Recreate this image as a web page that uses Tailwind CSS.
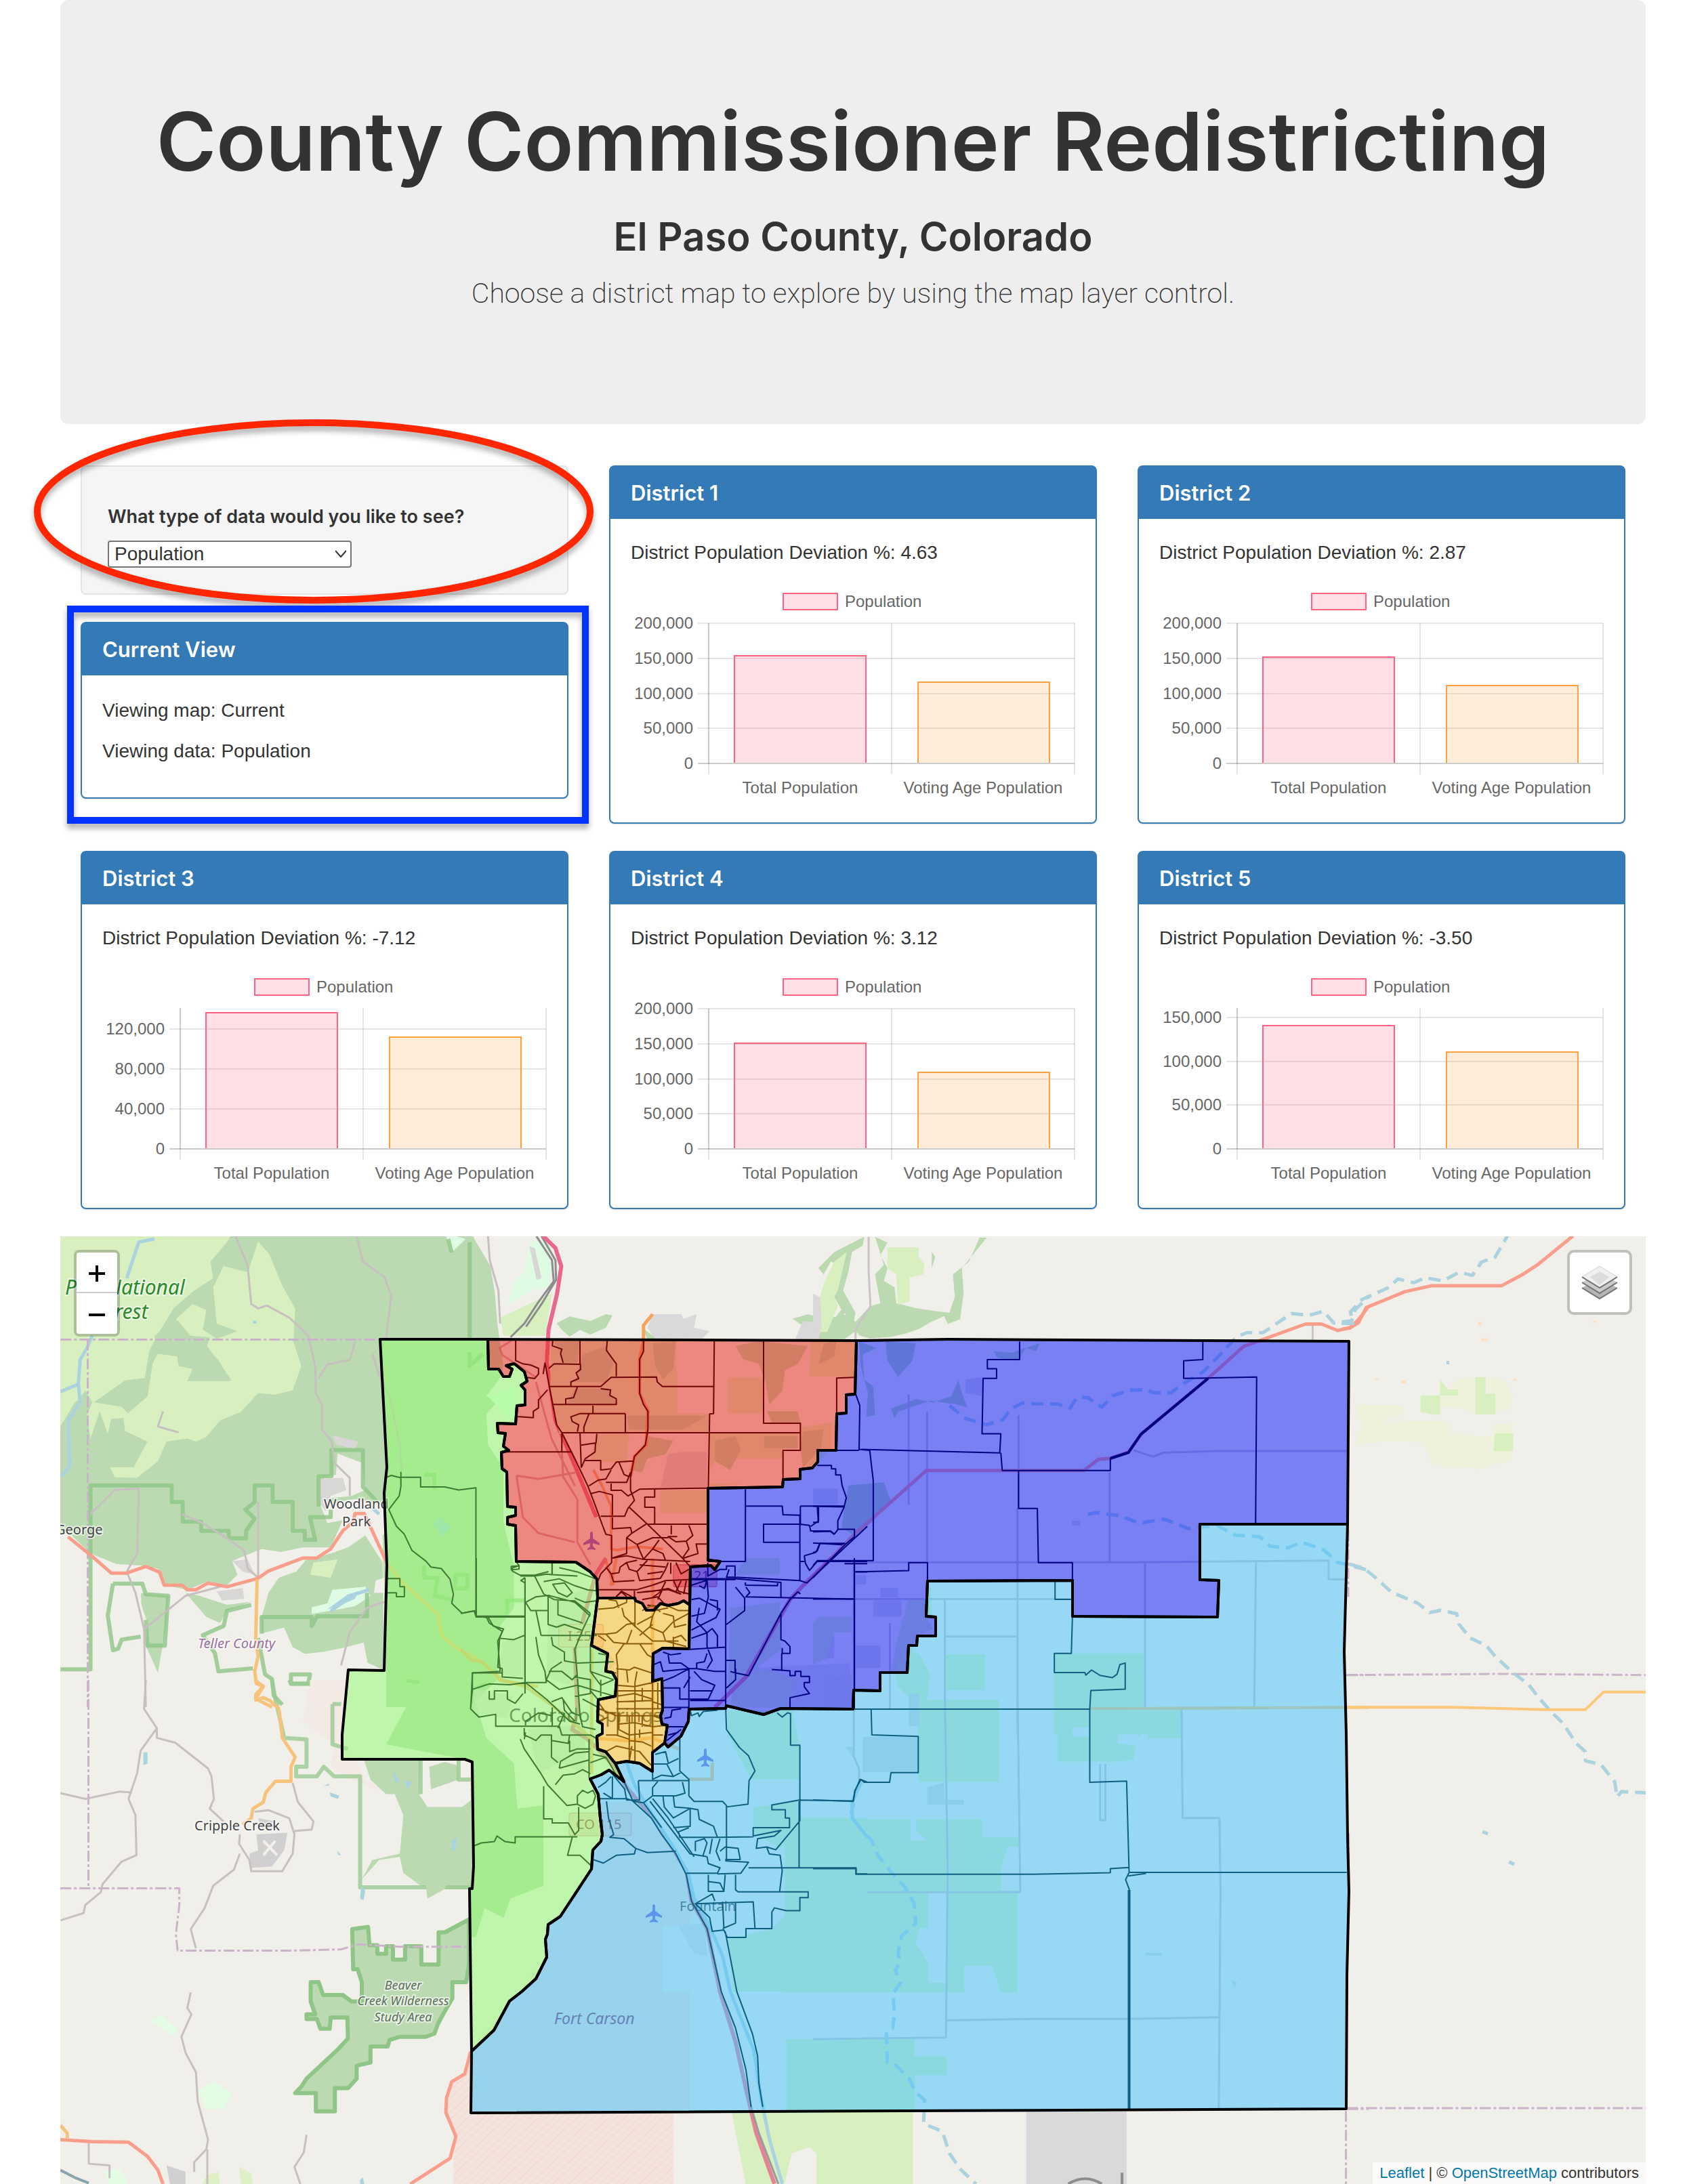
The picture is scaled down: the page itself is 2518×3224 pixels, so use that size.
<!DOCTYPE html>
<html lang="en">
<head>
<meta charset="utf-8">
<meta name="viewport" content="width=device-width, initial-scale=1">
<title>County Commissioner Redistricting</title>
<script src="https://cdn.jsdelivr.net/npm/@tailwindcss/browser@4"></script>
</head>
<body class="bg-white font-['Liberation_Sans',Arial,sans-serif] text-[28px] leading-10 text-[#333333]">
<div class="mx-auto w-full max-w-[2340px]">

  <header class="flex flex-col items-center rounded-xl bg-[#eeeeee] px-[120px] pt-[140px] pb-[164px] text-center">
    <h1 class="font-['Inter',sans-serif] text-[120px] leading-[138px] font-semibold">County Commissioner Redistricting</h1>
    <h2 class="mt-[38px] font-['Inter',sans-serif] text-[58px] leading-[66px] font-semibold">El Paso County, Colorado</h2>
    <p class="mt-[22px] font-['Roboto',sans-serif] text-[41px] leading-[58px] font-extralight">Choose a district map to explore by using the map layer control.</p>
  </header>

  <main>
    <div class="grid grid-cols-3 items-start gap-x-[60px] gap-y-10 px-[30px] pt-[61px] pb-10">

      <div class="relative flex flex-col gap-10">
        <form class="h-[191px] rounded-lg border-2 border-[#e3e3e3] bg-[#f5f5f5] px-[38px] pt-[54px]">
          <label for="datatype" class="block font-['Inter',sans-serif] text-[27px] leading-10 font-semibold">What type of data would you like to see?</label>
          <div class="relative mt-[15px] w-[360px]">
            <select id="datatype" class="block h-10 w-full appearance-none rounded border-2 border-[#767676] bg-white pl-2 leading-9 text-[#333333]">
              <option>Population</option>
            </select>
            <svg class="pointer-events-none absolute top-3 right-2 h-4 w-4" viewBox="0 0 16 16" fill="none" stroke="#333" stroke-width="2"><path d="M0 3l8 9 8-9"/></svg>
          </div>
        </form>

        <section class="rounded-lg border-2 border-[#337ab7] bg-white shadow-sm">
          <h3 class="bg-[#337ab7] px-[30px] py-5 font-['Inter',sans-serif] text-[31px] leading-[37px] font-semibold text-white">Current View</h3>
          <div class="flex flex-col gap-5 px-[30px] pt-8 pb-12">
            <p>Viewing map: Current</p>
            <p>Viewing data: Population</p>
          </div>
        </section>

        <!-- call-out marks over the form and the summary panel -->
        <svg class="pointer-events-none absolute inset-0 h-full w-full overflow-visible" fill="none" stroke-width="10">
          <g class="drop-shadow-[0_7px_4px_rgba(0,0,0,0.3)]"><ellipse cx="344" cy="68" rx="408" ry="131" stroke="#ff2600"/></g>
          <g class="drop-shadow-[0_7px_4px_rgba(0,0,0,0.3)]"><rect x="-15" y="212" width="760" height="312" stroke="#0433ff"/></g>
        </svg>
      </div>

      <section class="rounded-lg border-2 border-[#337ab7] bg-white shadow-sm">
        <h3 class="bg-[#337ab7] px-[30px] py-5 font-['Inter',sans-serif] text-[31px] leading-[37px] font-semibold text-white">District 1</h3>
        <div class="px-[30px] py-[30px]"><p class="mb-5">District Population Deviation %: 4.63</p><figure data-top="64" data-ticks="200,150,100,50,0" data-step="51.7" data-bars="112,151"></figure></div>
      </section>
      <section class="rounded-lg border-2 border-[#337ab7] bg-white shadow-sm">
        <h3 class="bg-[#337ab7] px-[30px] py-5 font-['Inter',sans-serif] text-[31px] leading-[37px] font-semibold text-white">District 2</h3>
        <div class="px-[30px] py-[30px]"><p class="mb-5">District Population Deviation %: 2.87</p><figure data-top="64" data-ticks="200,150,100,50,0" data-step="51.7" data-bars="114,156"></figure></div>
      </section>
      <section class="rounded-lg border-2 border-[#337ab7] bg-white shadow-sm">
        <h3 class="bg-[#337ab7] px-[30px] py-5 font-['Inter',sans-serif] text-[31px] leading-[37px] font-semibold text-white">District 3</h3>
        <div class="px-[30px] py-[30px]"><p class="mb-5">District Population Deviation %: -7.12</p><figure data-top="63" data-ticks="120,80,40,0" data-step="59" data-bars="70,106"></figure></div>
      </section>
      <section class="rounded-lg border-2 border-[#337ab7] bg-white shadow-sm">
        <h3 class="bg-[#337ab7] px-[30px] py-5 font-['Inter',sans-serif] text-[31px] leading-[37px] font-semibold text-white">District 4</h3>
        <div class="px-[30px] py-[30px]"><p class="mb-5">District Population Deviation %: 3.12</p><figure data-top="64" data-ticks="200,150,100,50,0" data-step="51.7" data-bars="115,158"></figure></div>
      </section>
      <section class="rounded-lg border-2 border-[#337ab7] bg-white shadow-sm">
        <h3 class="bg-[#337ab7] px-[30px] py-5 font-['Inter',sans-serif] text-[31px] leading-[37px] font-semibold text-white">District 5</h3>
        <div class="px-[30px] py-[30px]"><p class="mb-5">District Population Deviation %: -3.50</p><figure data-top="63" data-ticks="150,100,50,0" data-step="64.7" data-bars="89,128"></figure></div>
      </section>
    </div>

    <section class="relative overflow-hidden bg-[#f1efe9]" aria-label="District map">
      <svg class="block w-full font-['Noto_Sans',sans-serif] [&_path]:[vector-effect:non-scaling-stroke]" viewBox="89 1825 2340 1399" fill="none" stroke-linejoin="round">
        <defs>
          <pattern id="hatch" width="16" height="16" patternUnits="userSpaceOnUse" patternTransform="rotate(45)"><rect width="16" height="16" fill="#f3e3dc"/><path d="M0 0V16" stroke="#efd3cc" stroke-width="3"/></pattern>
        </defs>

        <!-- north-west: Pike National Forest -->
        <g transform="translate(80 1820) scale(.5102 .4464)">
          <path fill="#bbdab1" d="M0 0H1205L1262 110 1275 200 1282 300 1300 440 1290 480 1250 540 1280 560 1250 600 1255 700 1300 780V960L1330 1100V1240L1290 1300 1280 1480 1200 1568H960V1445L955 900 870 880 770 900 790 960 835 950 800 1040 720 1040 655 1055 600 1045 515 1085 530 1130 500 1165 440 1155 385 1180 320 1165 300 1110 250 1100 180 1095 105 1060 50 1000 0 985Z"/>
          <path fill="#bbdab1" d="M700 1120L730 1080 800 1060 850 1040 900 1000 950 1090 955 1447 905 1420 895 1355 845 1370 780 1385 725 1392 690 1370 665 1305 600 1325V1270L620 1190 650 1140ZM950 1000L960 1448H1000V950Z"/>
          <path fill="#bbdab1" d="M240 1190L330 1200 325 1290 300 1455 265 1365 270 1290ZM380 1190L420 1200 500 1230 570 1220 500 1250 480 1290 440 1270Z"/>
          <path fill="#d8efc0" d="M0 0H515L500 30 452 95 460 150 400 195 345 250 300 335 275 390 262 480 205 488 115 560 195 575 225 610 165 615 155 665 132 590 120 630 105 680 85 540 60 560 18 640 0 630ZM590 28L622 70 660 175 697 250 692 360 715 440 690 520 640 535 590 530 540 592 480 620 440 675 410 690 385 680 325 690 300 755 240 810 175 808 162 775 230 775 270 690 205 655 200 610 270 540 285 430 310 380 352 385 360 440 400 450 385 490 510 490 475 420 440 380 450 345 395 340 352 285 400 235 440 255 430 320 470 350 530 325 470 300 460 180 490 110 560 130Z"/>
          <path fill="#bbdab1" d="M18 640L90 520 110 560 60 700 20 780ZM440 370L515 490 440 420 300 400 290 340 360 290 380 340Z"/>
          <path fill="#e0fbe4" d="M1130 0L1190 20 1150 65ZM1375 30L1440 25 1435 180 1380 190 1310 240 1330 160 1360 130ZM805 1180L900 1170 915 1200 870 1235 745 1260 745 1238 790 1225ZM1255 540L1340 510 1335 620 1310 610Z"/>
          <path fill="#f1efe9" d="M820 1380L895 1355 907 1425 840 1440ZM165 1160H250L255 1340 185 1380 165 1370ZM465 1340L560 1320 580 1440 480 1450ZM930 1150L955 1140V1190H925ZM820 730L890 760 900 850 860 870 770 880 780 810 815 800Z"/>
          <path fill="#d8efc0" d="M1290 280L1440 200 1420 340H1300Z M750 1090L820 1080 800 1140 740 1130Z"/>
          <path fill="#d9d6d6" d="M765 815L835 810 845 850 800 870 785 920 765 890ZM805 670L880 690 870 715 815 700ZM470 1185L545 1175 550 1210 485 1215ZM515 1085L560 1080 580 1130 545 1120ZM1375 45L1390 50 1410 150 1395 155Z"/>
          <path stroke="#8fc587" stroke-opacity=".8" stroke-width="6" d="M18 1443H105V835H340V890H372V955H425V985H505V1010H555V985L580 945 553 915 580 890V835H632V890H690V985H725V1015H755L740 940H800V915M765 905V805H802V718H893V840L935 890M170 1160H255L265 1195 330 1200 320 1365H270L265 1280M170 1160L155 1265 170 1380 185 1375 195 1345 250 1335M600 1325V1270H745V1300L760 1268H905V1190M570 1230L500 1250 490 1300 430 1330 465 1390 475 1450 575 1440M590 1340L610 1460 630 1475 635 1530 660 1560M685 1460H740L735 1490H685ZM1202 30V350M1140 20L1150 65M1202 395V440L1240 400"/>
          <path stroke="#8fd080" stroke-width="6" opacity=".7" d="M1020 1480L1070 1490 1180 1530 1250 1490M1310 1260V1215H1360M1070 1100V1140H1110L1100 1200 1155 1215M1070 800H1100V850M1160 1130H1195V1175H1160Z"/>
          <path stroke="#c7bfc0" stroke-width="3" d="M525 11L560 110 570 235 590 250 615 240 680 280 735 340 755 440 757 530 775 570V650L803 690 810 760 855 810V870M875 11L893 95 935 130 955 145 975 210 960 350M870 360L855 420 790 435 765 480M105 930L175 850 245 845 240 1060 210 1120M210 1120L235 1190 260 1310 265 1568M260 1310L380 1200 480 1170M370 930L430 960 500 1010 550 1050 560 1110 590 1140V890M955 1220L905 1240 855 1320 830 1430M315 590L300 640 360 660M920 400L940 470 970 540 1000 700 1005 790M1255 11L1260 90 1285 190 1290 300"/>
          <path stroke="#8d8d8d" stroke-width="3" d="M1395 11L1440 90 1445 160 1400 230 1360 300 1320 345M1410 11L1450 90 1452 155 1410 235 1365 310"/>
          <path stroke="#aad3df" stroke-width="5" d="M290 20L245 30 230 80 210 150M110 340L95 380 75 420 70 500 18 525M70 500L75 560 40 620 45 770 20 805M920 910L940 930M800 1250L870 1195 910 1180M580 290V300"/>
          <path fill="#aad3df" d="M790 1245L850 1195 880 1185 870 1210 840 1225ZM1095 960L1120 940 1150 975 1120 1005Z"/>
          <path stroke="#cbb4c9" stroke-width="3" stroke-dasharray="16 4 4 4" d="M18 353H943M97 353V1568"/>
          <path stroke="#fa9e8c" stroke-width="5" d="M40 1005L110 1070 165 1125H210L265 1103 305 1122 318 1165H370L385 1180H410L445 1158 500 1170 590 1142 620 1118 720 1075H760L800 1045 835 985 865 955 870 928H897L920 985 960 1085"/>
          <path stroke="#f7c37c" stroke-width="5" d="M587 1145L583 1340 590 1400 580 1450 585 1490 605 1500 583 1540 630 1568M960 1085L1000 1150 1110 1260 1120 1330 1160 1370 1240 1420 1290 1480 1400 1500"/>
          <path stroke="#e8698b" stroke-width="6" d="M1415 11L1450 50 1467 110 1455 200 1430 320 1425 430 1450 620 1510 780 1568 940"/>
        </g>

        <!-- south-west: Cripple Creek and Beaver Creek -->
        <g transform="translate(80 2480) scale(.5102 .4745)">
          <path fill="#f3eae4" d="M740 0H845L833 246 870 250 900 310 960 350 880 320 800 270 810 200 720 130Z"/>
          <path fill="#bbdab1" d="M895 246H1060L1055 355H960L915 310ZM1085 270L1130 255 1165 265 1170 310 1090 340ZM985 355H1055L1080 395H1180L1210 370V650H1090L1060 640 1010 600 1000 550 940 560 890 620 920 560 1000 540 1010 420ZM960 200L1000 120 1060 0H1200L1250 180 1330 260 1340 400 1415 390V640L1320 680 1300 740 1245 710 1220 800H1205V250Z"/>
          <path fill="#bbdab1" stroke="#8fc587" stroke-width="6" d="M862 775L908 768 912 825H935V852H960V828H980V870H1015V828H1062V885H1112V785H1130L1200 745V885L1192 940H1152V990L1125 1040 1110 1070 1100 1100 1075 1110H1000L970 1120 965 1140H915V1190L875 1200V1240L850 1270H812V1342H757V1285H697L715 1265 730 1240 775 1195 820 1150 850 1115 848 1050H800L797 1085H770L760 1055H730V1040H755L742 1000V940H765L778 980H835L860 1000H890V940L878 900H865Z"/>
          <path stroke="#9acb93" stroke-width="6" opacity=".8" d="M630 0L640 60 655 130 665 180 730 185V270H700V300H760L780 270 810 300H885V645H1205M680 0L685 12H740M805 75H830M805 75V200L850 215M1060 355V246M1170 250V310H1205"/>
          <path fill="#bbdab1" d="M1075 640L1100 590 1150 585 1130 650 1080 680Z"/>
          <path fill="#e4fbe4" d="M275 1060L310 1040 355 1085 345 1108ZM415 1280L460 1248 515 1285 490 1335 440 1335ZM145 1530L190 1520 215 1568H160Z"/>
          <path fill="#dfefc6" d="M535 1515L570 1535 575 1568H540ZM440 1540L475 1530 480 1568H430Z"/>
          <path fill="#d2cfd0" d="M585 480L675 475 665 530 630 580 570 585 565 540 590 530ZM590 430L640 440 630 470 600 460ZM325 1510L380 1530V1568H335Z"/>
          <path stroke="#f1efe9" stroke-width="4" d="M605 500L645 545M640 500L605 545"/>
          <path stroke="#c7bfc0" stroke-width="3" d="M265 0L260 90 297 150V180L350 195 445 275 455 300 462 370 450 400 490 440M297 150L250 220 240 290 215 370 235 420 238 545 195 565 140 635 135 660 90 700 85 725 18 748M18 352L90 370 190 347 225 350M580 410L620 405 680 430 695 480 690 540 660 595H570L565 560 535 510 537 480M537 540L520 590 460 640 435 710 395 775 410 835M690 320L705 380 750 440 745 465 695 470M395 972L385 1020 397 1040 368 1110 380 1160 410 1220 415 1310 445 1430 440 1460 405 1500V1530M443 1460V1568M730 1415L722 1470 695 1515 712 1568M100 1440V1505L160 1510V1550"/>
          <path stroke="#8aa4ad" stroke-width="4" d="M18 1525L60 1548 100 1565"/>
          <path fill="#aad3df" d="M258 225H270V260L258 265ZM797 350L825 360 820 370 800 362ZM980 280L1000 320 985 315ZM1150 500L1165 490 1160 530 1148 530ZM888 640L900 655 895 685 885 680ZM1015 315H1035L1020 340ZM780 330L795 322V328ZM818 530L830 545 822 545ZM885 1555L893 1548 897 1568H885Z"/>
          <path stroke="#cbb4c9" stroke-width="3" stroke-dasharray="16 4 4 4" d="M99 0V647M18 648H362V700L352 790 357 842H680L830 838 880 822 1000 830H1200M1203 1350V1420H1210V1568"/>
          <path fill="url(#hatch)" d="M1205 1155L1210 1330H1792V1568H1155V1470L1162 1420 1135 1340 1150 1250 1188 1225Z"/>
          <path stroke="#fa9e8c" stroke-width="5" d="M18 1430L110 1436 215 1438 270 1482 300 1525 315 1568M1205 1155L1188 1225 1150 1250 1135 1300 1133 1345 1162 1420 1145 1488 1030 1568"/>
          <path stroke="#f7c37c" stroke-width="5" d="M580 0L605 20 583 45V62L605 55 625 65 650 90 660 180 697 240 685 270V315H640L612 350 605 380 575 400 570 430 545 450M18 1385L38 1410V1425"/>
        </g>

        <!-- north edge woodland and suburbs -->
        <g transform="translate(680 1940) scale(.3827 .3333)">
          <path fill="#d8efc0" d="M350 120H830V250H978L980 120V440H960V525H1310L1243 600V730L960 765V525H650L640 660 500 650 520 530H380L345 320ZM1030 280H1168V440H1030ZM1350 120H1520V275H1345ZM1310 500L1430 480V600L1330 700ZM770 780H950V880H770Z"/>
          <path fill="#f1efe9" d="M835 120H975V440H835ZM985 640H1240V750H960V690Z"/>
          <path fill="#bbdab1" d="M370 40L420 10 500 30 560 0 585 5 560 60 500 90 460 70 420 100 390 70ZM1280 20L1340 0 1400 20 1500 0 1540 60 1480 110 1300 110 1330 60ZM700 60L760 110 860 70 840 110H720ZM360 120H460L450 215H400ZM470 180L560 140 590 220 560 300 440 300ZM440 330L570 330 600 395H410ZM740 130L830 120 820 240 780 290 750 230ZM1060 140L1150 120 1340 140 1300 220 1250 250 1240 340 1190 400 1175 300 1150 220 1090 200ZM1400 130L1450 120 1440 190 1380 220ZM1180 430L1300 430 1310 480 1200 480ZM1320 520L1400 510 1390 590 1320 680 1310 590ZM640 450L950 450 860 510H650ZM720 540L820 560 790 620 720 640 700 700 650 690ZM980 560L1060 540 1080 600 1040 690 980 650ZM1170 540H1300V595H1170Z"/>
          <path fill="#d9d9d9" d="M740 0H850L860 20 910 0 900 60 960 75 930 110H750L720 60ZM1320 30L1400 40 1380 110H1290ZM850 610H950V765H770L800 620Z"/>
          <path stroke="#f6a35f" stroke-width="5" d="M740 0L705 50V120L690 200 690 350 722 430 715 580 670 630 655 720"/>
          <path stroke="#f09a60" stroke-width="4" opacity=".8" d="M512 690L545 760 580 850V1040L600 1045 680 1030 780 1040M560 1090L590 1200"/>
          <path stroke="#c08a90" stroke-width="3" opacity=".7" d="M215 715L300 730 450 700M215 715L240 900 300 970 440 1010M390 610L395 720 450 820V1010L500 1110M290 300L350 550 440 760M205 110L150 150 160 180 290 280"/>
        </g>

        <!-- north-east and plains -->
        <g transform="translate(1200 1820) scale(.523 .472)">
          <path fill="#bbdab1" d="M15 110L60 60 130 20 145 12 140 40 110 60 100 120 85 180 120 250 110 300 90 250 60 320 20 325 80 240 60 200 80 100 50 90 30 130ZM175 12L210 30 190 70 210 110 200 150 230 170 235 220 290 235 350 245 385 250 400 200 395 130 440 90 470 15H490L450 70 420 110 425 190 415 270 380 285 370 260 330 280 300 300 260 315 220 325 160 330 130 320 110 290 160 230 190 220 175 130 200 100ZM205 340L290 345 280 400 240 450 210 400ZM335 60L345 75 335 110ZM130 340L180 360 140 380 145 460 170 480 175 570 150 575 155 500 135 420ZM510 370L560 375 640 345 630 370 600 360 580 400 520 390ZM220 550L290 520 340 530 390 510 410 460 420 500 435 545 400 535 330 525 240 560 230 580ZM100 790L200 780 220 840 170 900 120 950 80 920Z"/>
          <path fill="#d8efc0" d="M210 45H298V75L315 100 310 130 272 140V215L240 225 235 130 210 110ZM60 90L95 60 70 180 60 200 70 230 40 310H20L15 220 30 160Z"/>
          <path fill="#d9d9d9" d="M0 190L20 200 25 300 0 310ZM430 460L480 450 475 510 430 500ZM0 800H70V850H0ZM120 1070H150V1100H120ZM190 1110H240V1140H190ZM730 900H755V915H730ZM170 1150H250V1200H170ZM120 1290H190V1360H120ZM0 1260H60V1330H0Z"/>
          <path fill="#d6e8c2" d="M270 1145H320V1200L340 1240 290 1260 270 1370 220 1375 240 1260ZM20 1200H110V1250H60L40 1330 0 1350V1220ZM30 1400L110 1380V1470H30Z"/>
          <path fill="#d6eebf" d="M323 1110H335V1200H323ZM255 1310L300 1315 330 1380 320 1480H300L240 1420 230 1370ZM375 1318H485V1430H375ZM680 1315H933V1485H680ZM295 1490H525V1568H295ZM680 1490H1040V1568H680Z"/>
          <path stroke="#c9c4c8" stroke-width="3" d="M157 12V120L162 230 120 300V340M1410 285V335M270 505V850M322 560V1030M580 570V860M837 750V1030M120 1030H900L1455 1025V1083H1505M937 1030V1485M1250 1030L1245 1485M115 1145H730M372 1145V1568M577 860V1568M372 1262H577M217 1220V1490M905 680L960 700 990 687 1150 682H1505M115 1030V1568"/>
          <path stroke="#aad3df" stroke-width="5" stroke-dasharray="18 10" d="M385 540L430 580 490 600 535 585 560 550 590 532 640 535 690 535 725 548 745 515 775 515 815 545 845 510 890 492 940 490 960 500 1010 500 1040 475 1100 435 1150 380 1195 325 1225 312 1270 312 1300 290 1350 252 1400 258 1440 245 1470 282 1520 275 1530 240 1568 200M775 880L800 875 870 885 920 908 990 895 1060 925 1140 915 1190 945 1260 950 1290 980 1340 985 1380 968 1440 990 1480 1030 1568 1055"/>
          <path stroke="#fa9e8c" stroke-width="5" d="M0 1075L115 945 320 743H765L805 708 840 705 890 685 930 625 1120 450 1215 355 1390 285H1435L1480 305 1515 297 1540 270 1568 230"/>
          <path stroke="#fbc77a" stroke-width="4" d="M780 1488L1568 1484"/>
          <path stroke="#cbb4c9" stroke-width="3" stroke-dasharray="16 4 4 4" d="M1508 1383H1568"/>
        </g>

        <!-- south-east plains -->
        <g transform="translate(1200 2500) scale(.523 .4617)">
          <path fill="#d6eebf" d="M300 20H525V283H297V110H310ZM680 0H933V50H1040V143H945L940 100 920 140 915 105H860V160L910 165 905 210 860 218H690V100H680ZM-80 397H110L118 402H275V470H325L290 440V402H477V460H580V490H550L530 560V630H577V955H530L505 870H427V955H-80ZM-75 1105H285V1160H377V1220H287V1338H-75Z"/>
          <path fill="#f1efe9" d="M325 637H375V925H325V860L290 800 300 750H325ZM733 108H780V138H733Z"/>
          <path fill="#d8efc0" d="M-230 1336H282V1568H10V1470L-10 1450 -60 1470 -80 1568H-190Z"/>
          <path fill="#d9d9d9" d="M602 1336H885V1568H602ZM322 300L370 285 372 340H425V355H322ZM140 138H297V252H140ZM270 0H300V105H270ZM937 828H985V838H937ZM1180 915L1197 925 1190 942ZM90 170H115V205Z"/>
          <path stroke="#c9c4c8" stroke-width="3" d="M372 0L380 570 375 1100 0 1105M577 0L585 635H0M375 1045L620 1040 890 1040 1145 1035M1040 50L1043 398H1147L1150 630 1145 1325M810 225V405H825V225M115 50V200L130 240V280"/>
          <path stroke="#8d8d8d" stroke-width="4" d="M720 1568Q768 1535 815 1568M872 1532V1568"/>
          <path stroke="#aad3df" stroke-width="5" stroke-dasharray="18 10" d="M115 350L108 380 120 405 165 470 185 520 220 570 260 620 285 670 290 735 250 775 240 830 245 860 232 885 247 925 225 960 230 1020 225 1070 207 1080 210 1180 235 1190 270 1230 290 1275 315 1300 312 1375 365 1400 385 1470 415 1520 460 1568"/>
          <path stroke="#fbc77a" stroke-width="4" d="M780 48L1568 44"/>
          <path stroke="#cbb4c9" stroke-width="3" stroke-dasharray="16 4 4 4" d="M1508 1328H1568M1504 1335V1568"/>
        </g>

        <!-- far east -->
        <g transform="translate(1980 1820) scale(.3333 .8954)">
          <path fill="#eff2da" d="M65 285L180 283 270 285V300L190 305 200 315 310 310H470L480 330 590 335H670L680 315H755V375L600 390 580 385 500 388 400 380 360 345 190 343 60 350 90 320ZM440 270L520 240H590V300L540 290 440 285ZM640 240H720L760 270 740 295 680 290Z"/>
          <path fill="#d8efc0" d="M350 268H437V300H410L350 295ZM437 242L470 258H517V268H437ZM593 238H638V265H682V299H593ZM680 330H760V360H673Z"/>
          <path fill="#fbe0c4" d="M605 147H622V153H605ZM618 174H648V178H618ZM148 239H163V242H148ZM265 243H285V248H265ZM760 240H775V244H760ZM1115 145H1130V148H1115Z"/>
          <path stroke="#fa9e8c" stroke-width="5" d="M0 159L40 156 75 148 110 123 280 97 400 87H710L800 69 870 52 1025 5"/>
          <path stroke="#aad3df" stroke-width="5" stroke-dasharray="18 10" d="M0 149H50L40 130 90 110 180 95 210 90 250 76 320 82 370 74 450 79 520 65 580 70 620 48 680 40 735 5M35 546L100 553 150 568 220 592 340 611 390 626 440 622 510 628 520 645 570 668 640 680 680 698 750 722 830 745 870 765 930 790 980 808 1040 842 1080 855 1080 870 1150 877 1210 905 1220 930 1240 921 1347 923"/>
          <path stroke="#aad3df" stroke-width="5" d="M625 987L648 991M742 1037L765 1041M465 214H477"/>
          <path stroke="#fbc77a" stroke-width="4" d="M20 782H500L900 786H1080L1160 757H1347"/>
          <path stroke="#cbb4c9" stroke-width="3" stroke-dasharray="16 4 4 4" d="M20 729L700 727 1347 729M25 1443H1347M30 490V600M32 990V1060"/>
        </g>

        <!-- city blocks, Fort Carson and the interstate -->
        <g transform="translate(680 2300) scale(.3827 .4082)">
          <path fill="url(#hatch)" d="M40 1980V1780L230 1568 335 1440 340 1330 510 1120 545 1000 530 880H660L760 980 860 1100 900 1240 880 1330H780V1568H885V2010H40Z"/>
          <path fill="#f3e3dc" d="M250 30L440 20 520 120 500 200 250 180ZM250 600L500 590 500 800 420 900 330 820Z" opacity=".5"/>
          <path fill="#dcd9d9" opacity=".8" d="M340 150L500 110 490 250 600 380 480 480 330 430ZM160 300L245 290V430L150 420ZM50 470L200 500 180 580 50 560ZM1060 400L1500 380 1510 540 1040 540ZM840 1330L940 1320 950 1440 900 1430ZM260 620L480 600V780L380 740 300 780Z"/>
          <path fill="#d6e8c2" d="M1040 180L1230 160 1235 330 1110 420 1030 500ZM1060 440L1180 400 1290 440 1270 540H1040ZM1100 0H1230V60H1060Z"/>
          <path fill="#d6eebf" d="M1030 550H1280L1305 680V800H1120L1030 640ZM1130 900L1300 880V1000L1230 1050 1130 990ZM1310 940H1568V1568H1050L1030 1380 1200 1340 1340 1210 1240 1130 1310 1120Z"/>
          <path stroke="#e8698b" stroke-width="6" opacity=".8" d="M560 0L520 60 470 230 440 330 450 560 430 620 490 655 600 760 640 830 760 960 830 1070 870 1130 890 1240 950 1340 1000 1568 1060 1750 1100 1920 1140 2080 1210 2263M1430 0L1320 100 1270 150 1100 430 980 540"/>
          <path stroke="#f2b36b" stroke-width="5" opacity=".8" d="M0 330L40 370 80 375 160 440 250 465 350 530 440 600 500 650 640 660 740 650 840 690M505 330V780M580 100L600 0M880 800H970V740M740 0V700"/>
          <path stroke="#aad3df" stroke-width="5" d="M640 740L670 820 720 900 830 1060 880 1150 900 1230 960 1330 1010 1440 1040 1568 1130 1780 1160 1960 1190 2100 1240 2263M1545 810L1510 880V940L1568 1010"/>
          <path stroke="#9b9b9b" stroke-width="3" d="M1120 1985L1150 2080 1225 2263"/>
          <rect x="378" y="240" width="172" height="82" rx="8" fill="#f2d5cc" stroke="#dba9a0" stroke-width="3"/>
          <rect x="418" y="922" width="240" height="82" rx="8" fill="#f2d5cc" stroke="#dba9a0" stroke-width="3"/>
          <rect x="820" y="24" width="168" height="80" rx="8" fill="#e6a7b4" stroke="#c96f88" stroke-width="3"/>
        </g>
        <g fill="#7a69d8">
          <path d="M-2 -12Q0 -16 2 -12V-4L12 3V6L2 3V8L6 11V13L0 12 -6 13V11L-2 8V3L-12 6V3L-2 -4Z" transform="translate(873 2275)"/>
          <path d="M-2 -12Q0 -16 2 -12V-4L12 3V6L2 3V8L6 11V13L0 12 -6 13V11L-2 8V3L-12 6V3L-2 -4Z" transform="translate(1041 2595)"/>
          <path d="M-2 -12Q0 -16 2 -12V-4L12 3V6L2 3V8L6 11V13L0 12 -6 13V11L-2 8V3L-12 6V3L-2 -4Z" transform="translate(965 2825)"/>
        </g>

        <g stroke="#ffffff" stroke-opacity=".6" stroke-width="4" paint-order="stroke">
          <g font-size="30" font-style="italic" fill="#2a8a2a"><text x="96" y="1911">Pike National</text><text x="138" y="1947">Forest</text></g>
          <g font-size="20" fill="#444444"><text x="478" y="2227">Woodland</text><text x="505" y="2253">Park</text><text x="82" y="2265">George</text><text x="287" y="2702">Cripple Creek</text></g>
          <text x="292" y="2433" font-size="20" font-style="italic" fill="#9a6fa0">Teller County</text>
          <g font-size="18" font-style="italic" fill="#5b6f58" text-anchor="middle"><text x="595" y="2937">Beaver</text><text x="595" y="2960">Creek Wilderness</text><text x="595" y="2984">Study Area</text></g>
        </g>
        <g fill="#444444">
          <text x="751" y="2542" font-size="28">Colorado Springs</text>
          <text x="1003" y="2821" font-size="20">Fountain</text>
          <g font-size="20" fill="#9a4b3e"><text x="838" y="2422">I 25</text><text x="850" y="2700">CO 115</text></g>
          <text x="1024" y="2333" font-size="20" fill="#7a2f60">21</text>
        </g>

        <g id="district-fills"></g>
        <text x="818" y="2988" font-size="23" font-style="italic" fill="#6782b4">Fort Carson</text>

        <!-- precinct boundaries -->
        <g stroke="#3f7a33" stroke-width="2">
          <path transform="translate(80 1820) scale(.5102 .4464)" d="M962 808L975 802 1003 810V838L998 870 968 915 990 970 1012 995 1035 1050 1075 1085 1090 1105 1120 1110 1145 1145 1155 1195 1150 1225 1180 1258 1215 1250 1220 1268 1255 1270 1270 1300 1300 1310 1283 1350 1290 1450 1210 1455 1205 1568M1003 790V838M1003 808H1060V840H1130L1170 850 1220 843V1270H1362M962 1143H1000V1170H1013V1203H990V1190H962M1338 1090L1345 1100 1325 1108V1118L1348 1132H1390L1430 1120M1440 1090V1130M1362 1140V1485M1362 1140L1350 1150"/>
          <path transform="translate(680 2300) scale(.3827 .4082)" d="M195 30L225 28V40L195 42ZM230 65H285L330 58 353 60 450 65M353 20V60M248 85V490M230 80L248 90M285 65L320 130 360 150 440 155 500 200M320 85L380 75 440 100 490 115 525 118M355 95L400 90 430 125 410 140 375 125ZM250 160L290 140 340 135 440 160 500 210M250 160L270 190 335 190M290 190L310 280M337 135V240L370 250 400 240 470 262M375 150V205L470 235M310 280H525M290 285L300 350 325 410 330 450 250 450M350 285L355 315 400 340V372L450 380 590 375M500 200L470 260 440 330 450 430 460 570 470 610 520 620M330 440L350 400 390 375M340 410L390 410 430 440 450 420M500 310V410L590 440M530 345L560 350M500 410L540 460 590 440M540 440V500M250 450L330 510 420 590 460 600M330 440L380 475 450 460 595 500M350 520L390 505 430 560 460 570M45 475V415H160M45 475L110 455 190 458 250 450M45 475L38 545 70 575 135 565V608H380L390 640H500L530 655M110 480V510H130V480H180V510L210 525 240 490M353 540V608M250 605V590L300 560 353 570M395 510L400 550 440 590M245 615V640L270 650 290 660 310 640H350V720L375 740M230 655L245 690 310 780 335 820 410 895 450 890M245 655L250 630M353 660L415 670 420 640M420 660V700L450 690 500 690M380 760L385 735 440 705 495 700V795M380 760L495 730M320 825V943H353V958H415L440 1000 455 985V900M365 820L395 785 440 780 470 765 500 780M450 890L450 860 470 840 490 850 510 840 520 860 510 890 480 905ZM53 1040L80 1030 130 1025 140 1005 170 1025 210 1030V1008H450M430 1010L412 1075H460L500 1110M60 0V210H248M0 200L30 195 60 190M60 210L100 215 110 235 160 265 150 290 205 295 245 280M150 290L143 395 160 400V430L240 435M495 655V710M500 740L560 720 610 800M510 710L560 720M375 615L400 560M500 480L530 512M470 510L530 540M440 430L500 440V490L440 500M520 155L480 160 440 145M380 35L450 50 520 75"/>
        </g>
        <g stroke="#6f0505" stroke-width="2">
          <path transform="translate(680 1940) scale(.3827 .3333)" d="M212 115V205L240 220 270 225 300 240V265L285 285 255 280M355 115L353 140 390 155 385 175 395 215M460 118V220M360 220L462 222V245L445 260 455 285 425 300V320M340 240L360 220M565 118L562 160 600 220V275M705 118V165L690 200V350L705 400 722 430 722 510 712 580 670 630 655 720 655 780 670 825 645 860 632 895H540M978 118L975 440 960 442 955 770M1168 118V483H1310V603H1243V730M1520 280L1450 283V440M345 320H540L580 280 755 278 758 300 778 320H975M325 215L318 265M325 215L345 340 370 490 390 525 440 640 490 760 520 850 545 930 560 975 582 980V1100L540 1150 530 1180M355 400H600V375L575 360 578 335 540 330M450 322L435 370 405 375V397M510 405V437M390 525H1310M635 440V525M460 440H635M460 440L425 455 430 475 455 490 450 520M495 440L475 500V525M460 525L465 680M525 530L522 570 465 580M520 570L518 610 480 640 465 680M155 610H425M390 525V608M335 335L300 380V415L280 430V458L215 453M480 648H540V690L580 685 600 655 665 650M610 655L630 710 650 720M580 690L560 730 530 735 495 760M560 745L640 745 655 700M500 795L535 785 585 800V890M580 750V780L620 780 645 805 690 775 950 770M748 775V810H710V855H748V930M650 855L720 930 855 1080 885 1118M720 930H950M812 935V975M585 900V950L655 945 660 970 640 990V1060L585 1080M660 970L715 930M640 990L680 1020 740 990 800 990M680 1020L705 1085 740 1040 765 1000M740 1040L780 1060 790 1090M880 935L895 980 870 1005 830 1008 800 985 835 985M870 1005L880 1040 855 1080M950 1018H908L915 1060 860 1080M585 1080L640 1070 700 1085 790 1090 885 1095M560 1120L580 1150 610 1145 615 1120 640 1100 680 1090M640 1100L650 1130 680 1140 720 1090M690 1110L790 1120M580 1150L590 1185 670 1180M680 1140L690 1180 770 1170 790 1130 800 1100M720 1150L780 1140M810 1100V1150M830 1100L850 1150 880 1130M530 1220H680L740 1200 790 1180 880 1175M600 1250L620 1230 640 1250M670 1225V1255M700 1230L800 1220 850 1240M790 1185L770 1230 740 1255M850 1180L830 1230M870 1180L860 1240"/>
          <path transform="translate(680 2300) scale(.3827 .4082)" d="M600 140L620 120 660 140M680 125L740 120 800 110 850 130M700 150L760 140 790 170M780 110L760 150M820 80L840 120 880 130M720 170L760 175"/>
        </g>
        <g stroke="#8a5c08" stroke-width="2">
          <path transform="translate(680 2300) scale(.3827 .4082)" d="M530 185L590 180 640 160V145M570 150L600 155 610 180M672 150V250M622 180L630 210 670 245 740 300 840 300M560 275L600 270 640 240 670 235M560 275L590 305 640 310 660 260M530 280L560 300M505 275H560M630 310L600 350 605 390M630 310H740M690 310L720 350 740 360M600 400L650 405 670 395 735 415M605 385V640M600 415H570M640 405L645 450M672 450L680 410M672 450V735M740 445V700M600 460L670 465 740 450M600 480H740M600 500L670 490 740 510M600 520L740 515M600 545H775M600 570H775M610 560V620L650 640 740 630M650 570V735M610 600L670 595 740 610M560 640L600 640 650 655M530 520L560 560H600M535 545L600 570M560 700L600 680 650 690M650 660L700 665 735 680M650 690L690 700 735 750M690 650V620M740 610L790 605M740 570L770 580M740 640L780 640M700 190L740 170 770 195M680 240L740 210 750 190 800 180M740 210L730 250 780 270 820 230M780 200L820 210 825 250 870 240M790 170L840 190 880 190M690 280L740 240M780 270L790 300 870 320M820 230L880 200M820 290L850 280 870 300M820 285V325M700 470V520M660 680L650 735M530 590L570 575M700 570V610M760 450V545M740 480H775M740 520L775 530"/>
        </g>
        <g stroke="#000080" stroke-width="2">
          <path transform="translate(1200 1820) scale(.523 .472)" d="M120 503L132 540 130 677 527 688 530 628H477L480 455H518V425H492V396H583V340M130 677L160 680 170 775V1025H12L0 1040M530 688L534 743H839V705L890 687 925 630 1115 455M1100 340V396L1046 400V455L1252 451 1249 912M580 745V862H633L636 1031H732V1087M120 1060L270 1056V1031H323V1090M117 1030V1430M0 1145H117M0 1078L90 975 117 950V927H70V900L87 860 94 828 82 790 78 757H64V738H52V727H12M0 855L90 857M12 855L15 905H0M0 935L50 933 60 942 70 928M0 970L80 975 90 970M0 1000L12 995 20 970M65 680H130"/>
          <path transform="translate(1200 1820) scale(.523 .472)" stroke-width="4" d="M840 705L890 687 925 630 1115 455"/>
          <path transform="translate(680 1940) scale(.3827 .3333)" d="M1098 775V1095H953M1098 850H1240L1243 888 1308 890V1180M1310 850V930H1168V1010H1308V930L1345 935 1350 960H1425L1440 975M1310 850H1480M1380 855V915L1350 940M1325 1070L1370 1055 1385 1015H1480M1325 1070L1330 1105 1345 1135 1375 1095 1568 1095M1308 1095H1325M953 1100V1160L1000 1130 1025 1130V1115H1058V1175M1035 1130L1025 1165H1058L1308 1180 1335 1190 1568 940M890 1175H1060"/>
          <path transform="translate(680 2300) scale(.3827 .4082)" d="M890 75H1060L1235 88V145M1098 88V98L1222 100V88M1022 80V540M1060 105L1095 145V190L1025 240M1100 105L1115 125 1100 140 1515 148M1518 0V545M1235 200V295L1250 300 1270 320V345H1240V325M1238 345V405M1200 403L1270 408V425H1290V410H1312V428H1345V450H1325V465L1345 490 1270 505V540M1300 122L1270 150 1235 200 1110 425 1060 415M1310 130L1300 122M1025 370H1058V415L1040 410M1025 470L1060 440V400M885 100L950 80 940 110 920 100M950 80L955 140 940 200 890 210M890 150L920 145 950 160 1000 185 985 215 890 260M960 150L990 155V190M920 180L910 230 950 270 890 290M950 270L970 255 990 280V325M950 270V320L970 370 950 400M885 330L1022 322M780 340L810 350 850 345M745 385L770 375 780 410 880 400M800 350L805 380 850 380 880 400M780 445L820 430 880 400 910 400 980 410H1022M880 400V545M780 470H845V510H955L980 460 930 440 900 410M885 430L860 470M885 480H970M780 540H880M885 515H1022M785 580L810 575 815 550 850 545M795 610H860M795 660L850 620M800 640L840 630M910 400V380L940 375 950 345M740 380L745 440M1480 20H1568M1520 50H1568"/>
        </g>
        <g stroke="#0e5f80" stroke-width="2">
          <path transform="translate(680 2300) scale(.3827 .4082)" d="M885 550L890 570 915 560 920 573 935 555 990 550M1022 545L1025 620 1075 685 1110 715 1135 770 1112 805 1108 890 1025 900M1220 560L1240 575 1260 560 1272 562V677H1308V950L1215 1055 1180 1045M1180 1045L1190 1070 1232 1075 1240 1130 1230 1205M1305 875L1515 878 1520 845 1540 800 1568 810M1305 875L1200 893V910H1252V940H1268V975H1128V1005L1235 985 1210 1005 1145 1015 1140 1050 1180 1045M845 650V770L880 800V860L900 880H1010L1025 895V1095M740 700V800L775 785 820 790 850 775M740 745H795L840 725M750 710L790 700 800 740M795 745L820 790M685 805H880M685 805L690 875H640L632 835 580 775M530 870H640L670 880 705 885 740 860V830L760 808M585 790V870M530 830L560 810 580 790M550 850L585 870M740 860H830L865 850 855 810M630 808L665 880 735 940 775 1000 830 1070 870 1145 890 1240 950 1340 1005 1568M705 885L740 930 775 975M730 880L885 1070M740 870L800 940 900 1080M780 860L785 900 820 940 885 905M820 860L825 900 885 905V970L820 975M885 905L915 910 920 945 975 970 990 1010H845L840 990 880 975M990 1010L1128 1008M905 1060V1025L940 1015 950 1030 935 1075M970 1015L960 1070M1000 1015L985 1060 1000 1095M885 1070L950 1080M1000 1060L1020 1045 1070 1050 1078 1090 1020 1090M950 1080L955 1105 1000 1120 990 1140 870 1140M1020 1095L1110 1100 1080 1140 990 1142M1110 1120H1525V1142H1568M1305 880V1120M955 1145V1205H1015L1020 1145M955 1170L1000 1175 1015 1205M1060 1145V1200L1070 1207H1340V1228H1308V1275H1255L1210 1265 1200 1280V1340H1100V1372H1028L1015 1345 970 1350 960 1300 905 1250 1128 1243 1135 1340M1060 1243V1320L1010 1340M1010 1243L1015 1340M905 1250L970 1215 980 1240M1020 1350L1065 1568 1125 1720 1145 1800 1150 1900 1165 1985M1005 1568L1060 1700 1100 1850 1120 1985M562 880L570 940 590 1000 575 1010 630 1015 675 1050 670 1070 600 1075 550 1103 510 1090M675 1050L720 1065 830 1060"/>
          <path transform="translate(1200 2500) scale(.523 .4617)" d="M115 50H781M781 50V284L885 280 892 572H1506M164 50L166 132 297 137V253H220L216 284H145L135 275 118 310 113 345 0 340M0 560H121V578H620L839 573V560L892 556M892 572L882 595 893 628M940 575L890 583"/>
          <path transform="translate(1200 2500) scale(.523 .4617)" stroke-width="4" d="M892 628V1328"/>
          <path transform="translate(1200 1820) scale(.523 .472)" d="M683 1090V1146H732M732 1203L729 1315H681V1375H767L770 1383 786 1367 810 1384 845 1391 858 1380 866 1350 881 1345V1427L784 1431 781 1490"/>
        </g>

        <g id="district-lines" stroke="#000000" stroke-width="4"></g>
      </svg>

      <div class="absolute top-5 left-5 flex w-[68px] flex-col overflow-hidden rounded-lg border-4 border-black/20 bg-clip-padding">
        <button type="button" aria-label="Zoom in" class="flex h-[60px] items-center justify-center border-b-2 border-[#cccccc] bg-white pt-1"><svg class="h-6 w-6" viewBox="0 0 24 24" stroke="#000" stroke-width="4"><path d="M12 0V24M0 12H24"/></svg></button>
        <button type="button" aria-label="Zoom out" class="flex h-[60px] items-center justify-center bg-white pt-1"><svg class="h-6 w-6" viewBox="0 0 24 24" stroke="#000" stroke-width="4"><path d="M0 12H24"/></svg></button>
      </div>

      <button type="button" aria-label="Layers" class="absolute top-5 right-5 flex h-24 w-24 items-center justify-center rounded-[10px] border-4 border-black/20 bg-white bg-clip-padding">
        <svg class="h-[52px] w-[52px]" viewBox="0 0 52 52"><path d="M0 34L26 20 52 34 26 50Z" fill="#b5b5b5"/><path d="M0 34L26 50 52 34" fill="none" stroke="#747474" stroke-width="2"/><path d="M0 26L26 12 52 26 26 42Z" fill="#cbcbcb"/><path d="M0 26L26 42 52 26" fill="none" stroke="#747474" stroke-width="2"/><path d="M0 18L26 2 52 18 26 34Z" fill="#f0f0f0" stroke="#cfcfcf" stroke-width="1"/><path d="M12 18L26 10 40 18 26 30Z" fill="#dcdcdc"/><path d="M0 18L26 34 52 18" fill="none" stroke="#747474" stroke-width="2"/></svg>
      </button>

      <p class="absolute right-0 bottom-0 bg-white/70 px-[10px] text-[22px] leading-8"><a href="#" class="text-[#0078a8]">Leaflet</a> | © <a href="#" class="text-[#0078a8]">OpenStreetMap</a> contributors</p>
    </section>
  </main>
</div>

<script>
  // Bar charts: 656 x 328 canvas, baseline at y = 271
  document.querySelectorAll('figure').forEach(function (f) {
    var d = f.dataset, base = 271, top = +d.top, step = +d.step, ticks = d.ticks.split(','), bars = d.bars.split(',').map(Number), s = '';
    ticks.forEach(function (t, i) {
      var y = Math.round(base - step * (ticks.length - 1 - i));
      s += '<path d="M99 ' + y + 'H655" stroke="#000" stroke-opacity="' + (t === '0' ? .2 : .1) + '"/>';
      s += '<text x="92" y="' + (y + 8) + '" text-anchor="end">' + (t === '0' ? '0' : t + ',000') + '</text>';
    });
    s += '<path d="M115 ' + top + 'V287M385 ' + top + 'V287M655 ' + top + 'V287" stroke="#000" stroke-opacity=".1"/><path d="M115 ' + top + 'V271" stroke="#000" stroke-opacity=".12"/>';
    [['#ff6384', 153], ['#ff9f40', 424]].forEach(function (b, i) {
      s += '<path d="M' + b[1] + ' 270V' + bars[i] + 'h194V270" fill="' + b[0] + '" fill-opacity=".2" stroke="' + b[0] + '"/>';
    });
    s += '<rect x="225" y="20" width="80" height="24" fill="#ff6384" fill-opacity=".2" stroke="#ff6384"/><text x="316" y="40">Population</text>';
    s += '<text x="250" y="315" text-anchor="middle">Total Population</text><text x="520" y="315" text-anchor="middle">Voting Age Population</text>';
    f.innerHTML = '<svg class="block w-full" viewBox="0 0 656 328" font-size="24"><g stroke-width="2" fill="none" class="[&_text]:fill-[#666666] [&_text]:stroke-none">' + s + '</g></svg>';
  });

  // District outlines, built from the boundary arcs that neighbours share
  var P = function (s) { return s.split(' '); }, R = function (a) { return a.slice().reverse(); };
  var greenRed = P('720,1977 721,2021 736,2021 743,2032 752,2032 756,2021 747,2016 759,2013 774,2025 778,2039 769,2045 775,2052 775,2074 763,2075 761,2102 734,2101 735,2115 746,2116 743,2135 751,2141 740,2144 741,2168 748,2173 749,2224 761,2225 761,2237 749,2240 749,2250 761,2252 762,2305 850,2306 871,2320 881,2331 882,2359');
  var greenOrange = P('882,2359 873,2429 897,2441 894,2467 904,2469 910,2480 908,2504 883,2509 882,2541 889,2545 889,2559 881,2563 882,2582 894,2586 908,2603');
  var greenCyan = P('908,2603 921,2630 899,2613 887,2620 871,2626 883,2649 886,2684 889,2708 887,2718 875,2731 873,2759 827,2829 809,2841 808,2855 805,2863 807,2889 791,2921 770,2940 752,2954 729,2997 696,3028');
  var west = P('696,3028 693,2788 697,2788 699,2755 697,2601 686,2597 505,2597 505,2561 514,2465 567,2466 571,2311 567,2204 571,2166 561,1977');
  var redBlue = P('1264,1979 1262,2058 1249,2059 1249,2086 1235,2087 1234,2141 1207,2141 1207,2158 1199,2167 1181,2169 1181,2183 1156,2184 1155,2195 1045,2197 1045,2303 1063,2305 1055,2317 1049,2311 1019,2313 1018,2369');
  var redOrange = P('1018,2369 1009,2363 1001,2367 986,2370 975,2367 965,2377 954,2377 948,2367 938,2363 937,2359 882,2359');
  var orangeBlue = P('1018,2369 1017,2434 978,2433 964,2441 963,2482 977,2478 978,2524 975,2533 977,2545 985,2547 981,2573');
  var orangeCyan = P('981,2573 963,2587 963,2615 944,2603 925,2600 908,2603');
  var blueCyan = P('1989,2250 1771,2250 1771,2332 1799,2333 1797,2387 1583,2386 1583,2333 1369,2334 1367,2386 1381,2387 1381,2415 1354,2415 1353,2429 1341,2429 1339,2469 1299,2469 1299,2496 1260,2495 1259,2523 1152,2522 1127,2531 1072,2518 1071,2522 1017,2523 1016,2541 1005,2563 986,2579 981,2573');
  var east = P('1989,2250 1984,2438 1987,2560 1989,2712 1991,2792 1988,2915 1987,3113 695,3119 696,3028');
  var areas = [
    ['#90fe6e', [].concat(greenRed, greenOrange, greenCyan, west)],
    ['#ea2218', [].concat(greenRed[0], redBlue, redOrange, R(greenRed))],
    ['#fcc022', [].concat(R(redOrange), orangeBlue, orangeCyan, R(greenOrange))],
    ['#0012ff', [].concat(redBlue, orangeBlue, R(blueCyan), ['1991,1980', '1399,1977'])],
    ['#3ec4ff', [].concat(east, R(greenCyan), R(orangeCyan), R(blueCyan))]
  ];
  document.getElementById('district-fills').innerHTML = areas.map(function (a) { return '<polygon points="' + a[1].join(' ') + '" fill="' + a[0] + '" fill-opacity=".5"/>'; }).join('');
  document.getElementById('district-lines').innerHTML = areas.map(function (a) { return '<polygon points="' + a[1].join(' ') + '"/>'; }).join('');
</script>
</body>
</html>
